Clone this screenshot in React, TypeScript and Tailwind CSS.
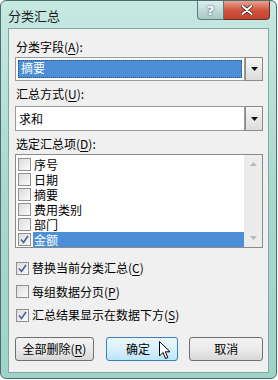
import React from 'react';

const font = { fontFamily: '"Noto Sans CJK SC", "Noto Sans", sans-serif' };

function Key({ k }: { k: string }) {
  return (
    <>
      (<span className="underline underline-offset-2">{k}</span>)
    </>
  );
}

function Check({ on }: { on?: boolean }) {
  return (
    <span className="w-[13px] h-[13px] shrink-0 border border-[#8e8f8f] bg-gradient-to-br from-[#dcdcdc] to-[#fbfbfb] flex items-center justify-center">
      {on && (
        <svg width="9" height="9" viewBox="0 0 9 9">
          <path d="M1 4.5 L3.5 7.5 L8 1" fill="none" stroke="#4a5f97" strokeWidth="1.6" />
        </svg>
      )}
    </span>
  );
}

function DropButton() {
  return (
    <div className="w-[18px] self-stretch border border-[#8a8a8a] bg-gradient-to-b from-[#f5f5f5] to-[#dcdcdc] flex items-center justify-center">
      <svg width="7" height="4" viewBox="0 0 7 4">
        <path d="M0 0 H7 L3.5 4 Z" fill="#111" />
      </svg>
    </div>
  );
}

const items = ['序号', '日期', '摘要', '费用类别', '部门', '金额'];

export default function App() {
  return (
    <div className="w-[278px] h-[380px] bg-white text-[12px] text-black" style={font}>
      <div className="w-[277px] h-[379px] rounded-[6px] border border-[#4d6e6b] bg-gradient-to-b from-[#c6e9e2] via-[#a9d8cf] to-[#9fd3c9] flex flex-col px-[7px] pb-[5px]">
        {/* Title bar */}
        <div className="h-[27px] flex items-start justify-between shrink-0">
          <div className="pt-[7px] text-[13px] leading-[15px] text-[#1e1e1e]">分类汇总</div>
          <div className="flex mr-[-1px]">
            <div className="w-[27px] h-[19px] border border-[#5d7b7a] border-t-0 rounded-bl-[4px] bg-gradient-to-b from-[#dbeeee] to-[#a7c8c6] flex items-center justify-center text-white text-[13px] font-bold leading-none" style={{ fontFamily: '"DejaVu Sans", sans-serif', textShadow: '0 0 2px #333' }}>
              ?
            </div>
            <div className="w-[46px] h-[19px] border border-[#6b2e2a] border-t-0 border-l-0 rounded-br-[4px] bg-gradient-to-b from-[#e8a493] via-[#d2533d] to-[#c6442f] flex items-center justify-center">
              <svg width="12" height="10" viewBox="0 0 12 10">
                <path d="M1.5 1 L10.5 9 M10.5 1 L1.5 9" stroke="#3a1a14" strokeWidth="3.4" strokeLinecap="round" />
                <path d="M1.5 1 L10.5 9 M10.5 1 L1.5 9" stroke="#fff" strokeWidth="2" strokeLinecap="round" />
              </svg>
            </div>
          </div>
        </div>

        {/* Client area */}
        <div className="flex-1 border border-[#7fa9a2] bg-[#f0f0f0] pl-[6px] pr-[5px] pt-[10px] flex flex-col">
          <div className="leading-[15px] pl-[1px]">分类字段<Key k="A" />:</div>
          <div className="mt-[3px] h-[24px] flex">
            <div className="flex-1 border border-[#9a9a9a] bg-white p-[2px] flex">
              <div className="flex-1 bg-[#4d8fd6] border border-dotted border-[#2a4f80] text-white leading-[14px] pl-[2px]">摘要</div>
            </div>
            <DropButton />
          </div>

          <div className="mt-[5px] leading-[15px] pl-[1px]">汇总方式<Key k="U" />:</div>
          <div className="mt-[5px] h-[25px] flex">
            <div className="flex-1 border border-[#9a9a9a] bg-white pl-[3px] flex items-center">求和</div>
            <DropButton />
          </div>

          <div className="mt-[5px] leading-[15px] pl-[1px]">选定汇总项<Key k="D" />:</div>
          <div className="mt-[3px] h-[94px] border border-[#8a8a8a] bg-white flex">
            <div className="flex-1 pl-[2px] pt-[2px] flex flex-col">
              {items.map((name, i) => {
                const sel = i === items.length - 1;
                return (
                  <div key={name} className="h-[15px] flex items-center overflow-hidden">
                    <Check on={sel} />
                    <span className={`ml-[2px] flex-1 h-[15px] flex items-center leading-none pl-[1px] ${sel ? 'bg-[#4d8fd6] text-white' : ''}`}>{name}</span>
                  </div>
                );
              })}
            </div>
            <div className="w-[18px] bg-[#ececec] flex flex-col items-center justify-between py-[7px]">
              <svg width="7" height="4" viewBox="0 0 7 4">
                <path d="M0 4 H7 L3.5 0 Z" fill="#b8b8b8" />
              </svg>
              <svg width="7" height="4" viewBox="0 0 7 4">
                <path d="M0 0 H7 L3.5 4 Z" fill="#b8b8b8" />
              </svg>
            </div>
          </div>

          <div className="mt-[8px] flex flex-col pl-[1px]">
            <div className="h-[24px] flex items-center gap-[3px]">
              <Check on />
              <span>替换当前分类汇总<Key k="C" /></span>
            </div>
            <div className="h-[23px] flex items-center gap-[3px]">
              <Check />
              <span>每组数据分页<Key k="P" /></span>
            </div>
            <div className="h-[24px] flex items-center gap-[3px]">
              <Check on />
              <span>汇总结果显示在数据下方<Key k="S" /></span>
            </div>
          </div>

          <div className="mt-[10px] flex items-center">
            <button className="w-[79px] h-[24px] rounded-[3px] border border-[#707070] bg-gradient-to-b from-[#f2f2f2] via-[#ebebeb] to-[#d7d7d7]">
              全部删除<Key k="R" />
            </button>
            <button className="relative ml-[12px] w-[73px] h-[24px] rounded-[3px] border border-[#3c7fb1] bg-gradient-to-b from-[#eaf6fd] via-[#d9f0fc] to-[#bde4f9] pr-[8px]">
              确定
              <svg className="absolute left-[52px] top-[3px]" width="12" height="19" viewBox="0 0 12 19">
                <path d="M0.5 0.5 V15 L4 11.5 L6.5 17.5 L8.8 16.5 L6.4 10.8 H11 Z" fill="#fff" stroke="#000" strokeWidth="1" strokeLinejoin="round" />
              </svg>
            </button>
            <button className="ml-[11px] w-[74px] h-[24px] rounded-[3px] border border-[#707070] bg-gradient-to-b from-[#f2f2f2] via-[#ebebeb] to-[#d7d7d7]">
              取消
            </button>
          </div>
        </div>
      </div>
    </div>
  );
}
